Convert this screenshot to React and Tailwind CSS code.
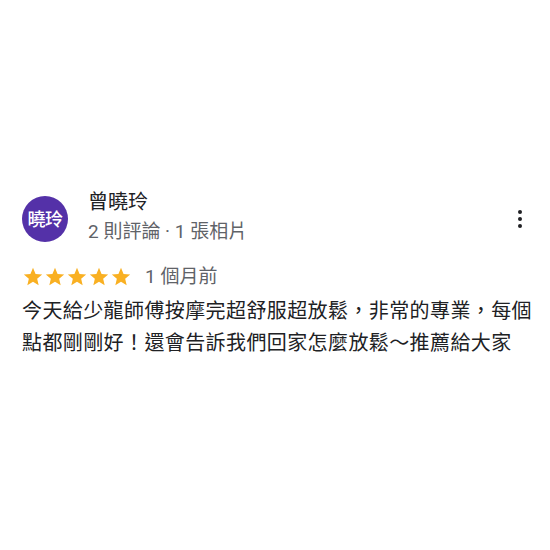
import React from 'react'

const Star = () => (
  <svg viewBox="0 0 24 24" className="h-[22px] w-[22px]" fill="#f9b022">
    <path d="M12 17.27 18.18 21l-1.64-7.03L22 9.24l-7.19-.61L12 2 9.19 8.63 2 9.24l5.46 4.73L5.82 21z" />
  </svg>
)

export default function App() {
  return (
    <div
      className="flex h-[550px] w-[550px] flex-col bg-white pt-[190px] pl-[22px] pr-[14px]"
      style={{ fontFamily: 'Roboto, "Noto Sans CJK TC", sans-serif' }}
    >
      {/* Header */}
      <div className="flex items-start">
        <div className="mt-[6px] flex h-[46px] w-[46px] flex-shrink-0 items-center justify-center rounded-full bg-[#5431a8] text-[18px] font-medium tracking-[-0.5px] text-white">
          曉玲
        </div>
        <div className="ml-[20px] flex-1">
          <div className="text-[20px] leading-[24px] text-[#202124]">曾曉玲</div>
          <div className="mt-[7px] text-[19px] leading-[22px] text-[#5f6368]">2 則評論 · 1 張相片</div>
        </div>
        <button className="mt-[16px] mr-[10px] flex flex-col items-center gap-[3px] p-1" aria-label="More">
          <span className="h-[4px] w-[4px] rounded-full bg-[#202124]" />
          <span className="h-[4px] w-[4px] rounded-full bg-[#202124]" />
          <span className="h-[4px] w-[4px] rounded-full bg-[#202124]" />
        </button>
      </div>

      {/* Rating */}
      <div className="mt-[23px] flex h-[22px] items-center">
        <div className="flex">
          <Star /><Star /><Star /><Star /><Star />
        </div>
        <span className="ml-[13px] text-[19px] leading-[22px] text-[#5f6368]">1 個月前</span>
      </div>

      {/* Body */}
      <p className="mt-[7px] text-[20px] leading-[32px] tracking-[0.4px] text-[#202124]">
        今天給少龍師傅按摩完超舒服超放鬆，非常的專業，每個點都剛剛好！還會告訴我們回家怎麼放鬆～推薦給大家
      </p>
    </div>
  )
}
